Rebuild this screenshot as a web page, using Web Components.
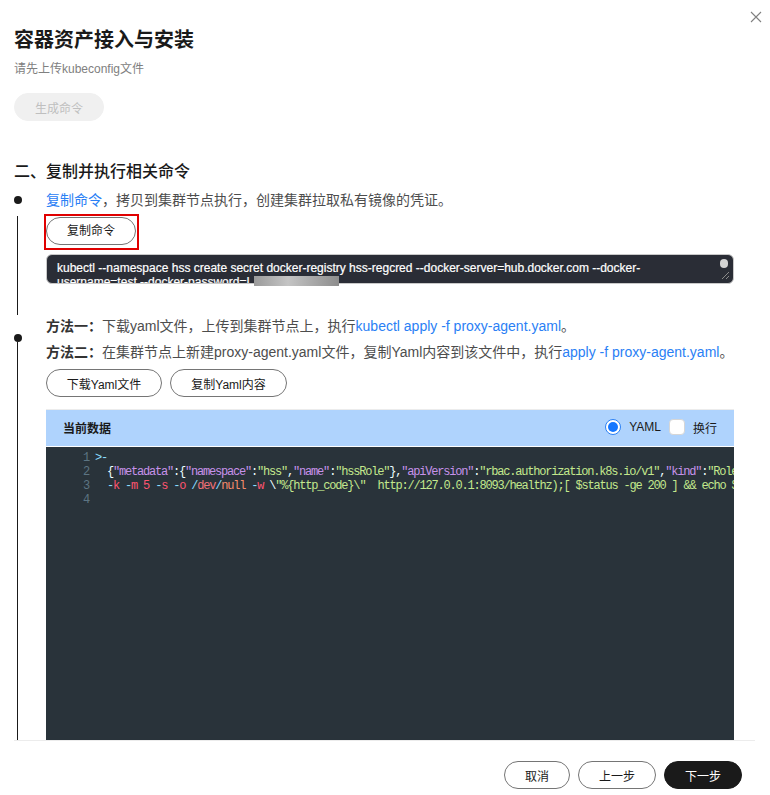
<!DOCTYPE html>
<html lang="zh-CN"><head><meta charset="utf-8"><title>容器资产接入与安装</title>
<style>
html,body{margin:0;padding:0;background:#fff;overflow:hidden;font-family:"Liberation Sans","Noto Sans CJK SC",sans-serif;color:#1a1a1a}
</style></head><body>

<template id="pill-tpl"><style>
:host{display:inline-flex;align-items:center;justify-content:center;box-sizing:border-box;height:28px;border-radius:14px;border:1px solid #757575;background:#fff;font-size:12px;color:#1a1a1a;white-space:nowrap}
:host([variant=primary]){background:#1a1a1a;border-color:#1a1a1a;color:#fff}
:host([variant=disabled]){background:#f0f0f0;border-color:#f0f0f0;color:#bfbfbf}
</style><slot></slot></template>

<template id="rail-tpl"><style>
:host{display:grid;grid-template-columns:32px minmax(0,1fr);min-width:0}
.rail{display:flex;flex-direction:column;align-items:flex-start}
.dot{width:8px;height:8px;border-radius:50%;background:#1a1a1a;flex:none;margin-top:var(--dot-top,0)}
.line{width:1px;background:#1a1a1a;flex:1;margin-left:3px;margin-top:var(--gap,0)}
.body{min-width:0}
</style><div class="rail"><div class="dot"></div><div class="line"></div></div><div class="body"><slot></slot></div></template>

<template id="cmd-tpl"><style>
:host{display:block;box-sizing:border-box;height:30px;border:1px solid #c9c9c9;border-radius:6px;background:#2a2d36;position:relative;overflow:hidden;color:#fff;font-size:12px;line-height:14px;-webkit-text-stroke:.2px #fff}
.t{padding:6px 14px 0 10px}
.thumb{position:absolute;right:5px;top:4px;width:8px;height:9px;border-radius:4px;background:#d4d4d4}
svg{position:absolute;right:3px;bottom:3px}
</style><div class="t"><slot></slot></div><div class="thumb"></div>
<svg width="9" height="9" viewBox="0 0 9 9"><path d="M1 8L8 1M5 8L8 5" stroke="#8a8a8a" stroke-width="1" fill="none"/></svg></template>

<template id="viewer-tpl"><style>
:host{display:block;width:688px;box-sizing:border-box}
.head{box-sizing:border-box;height:38px;background:#afd3fd;border-top:1px solid #ececec;border-bottom:1px solid #fff;display:flex;align-items:center;padding:0 17px 2px;font-size:12px;color:#1a1a1a}
.title{font-weight:600;flex:1}
.radio{width:16px;height:16px;border-radius:50%;border:1px solid #2a80f5;box-sizing:border-box;background:#fff;display:flex;align-items:center;justify-content:center;margin-right:8px}
.radio i{width:10px;height:10px;border-radius:50%;background:#1476ff;display:block}
.yaml{margin-right:8px}
.check{width:16px;height:16px;border-radius:4px;border:1px solid #d6d6d6;box-sizing:border-box;background:#fff;margin-right:8px}
.code{background:#29333a;height:293px;overflow:hidden;padding-top:4px;box-sizing:border-box}
</style><div class="head"><span class="title">当前数据</span><span class="radio"><i></i></span><span class="yaml">YAML</span><span class="check"></span><span>换行</span></div>
<div class="code"><slot></slot></div></template>

<template id="line-tpl"><style>
:host{display:flex;height:14px;font:12px/14px "Liberation Mono",monospace;letter-spacing:-1.2px;white-space:pre;color:#eeffff}
.n{width:43px;text-align:right;color:#5d7583;flex:none}
.c{margin-left:6px}
</style><span class="n"></span><span class="c"><slot></slot></span></template>

<template id="dialog-tpl"><style>
:host{display:block;width:770px;height:795px;position:relative;overflow:hidden;background:#fff}
.x{position:absolute;right:8px;top:11px}
.scroll{height:741px;box-sizing:border-box;margin:0 15px 0 14px;border-bottom:1px solid #ececec;overflow:hidden;padding-top:28px}
.foot{display:flex;justify-content:flex-end;gap:8px;padding:20px 28px 0 0}
</style><svg class="x" width="12" height="12" viewBox="0 0 12 12"><path d="M1 1L11 11M11 1L1 11" stroke="#808080" stroke-width="1.1" fill="none"/></svg>
<div class="scroll"><slot></slot></div><div class="foot"><slot name="foot"></slot></div></template>

<modal-dialog>
  <style>
    .h1{font-size:20px;line-height:24px;font-weight:700;color:#1a1a1a}
    .sub{font-size:12px;line-height:18px;color:#808080;margin-top:8px}
    .gen{margin-top:15px;display:flex;width:90px}
    .h2{font-size:16px;line-height:24px;font-weight:500;color:#1a1a1a;margin-top:39px}
    .txt{font-size:14px;line-height:20px;color:#4d4d4d;white-space:nowrap}
    .txt a{color:#2a80f5;text-decoration:none}
    .txt strong{font-weight:700;color:#333}
    step-rail.a{--dot-top:6px;--gap:12px;height:125px;margin-top:6px}
    step-rail.b{--dot-top:18px;height:424px;margin-top:1px}
    .copywrap{display:inline-block;box-sizing:border-box;margin:4px 0 0 -2px;border:2px solid #e00000;padding:1px 1px 3px 0;line-height:0;vertical-align:top}
    .btn1{width:90px}
    .cmdbox{margin-top:4px;position:relative;width:688px}
    .mask{position:absolute;left:208px;top:22px;width:85px;height:10px;background:linear-gradient(90deg,#9a9a9a,#c4c4c4 40%,#a8a8a8 70%,#8d8d8d)}
    .row{display:flex;gap:8px;margin-top:7px}
    .kw{color:#c792ea}.s{color:#c3e88d}.r{color:#ff5370}.cy{color:#89ddff}.o{color:#f78c6c}.f{color:#f07178}
  </style>
  <div class="h1">容器资产接入与安装</div>
  <div class="sub">请先上传kubeconfig文件</div>
  <pill-button class="gen" variant="disabled">生成命令</pill-button>
  <div class="h2">二、复制并执行相关命令</div>
  <step-rail class="a">
    <div class="txt"><a href="#">复制命令</a>，拷贝到集群节点执行，创建集群拉取私有镜像的凭证。</div>
    <div class="copywrap"><pill-button class="btn1">复制命令</pill-button></div>
    <div class="cmdbox"><command-box>kubectl --namespace hss create secret docker-registry hss-regcred --docker-server=hub.docker.com --docker-username=test --docker-password=L</command-box><div class="mask"></div></div>
  </step-rail>
  <step-rail class="b">
    <div class="txt"><strong>方法一：</strong>下载yaml文件，上传到集群节点上，执行<a href="#">kubectl apply -f proxy-agent.yaml</a>。</div>
    <div class="txt" style="margin-top:6px"><strong>方法二：</strong>在集群节点上新建proxy-agent.yaml文件，复制Yaml内容到该文件中，执行<a href="#">apply -f proxy-agent.yaml</a>。</div>
    <div class="row"><pill-button style="width:116px">下载Yaml文件</pill-button><pill-button style="width:117px">复制Yaml内容</pill-button></div>
    <yaml-viewer style="margin-top:12px">
      <code-line n="1"><span class="cy">&gt;-</span></code-line>
      <code-line n="2">  {<span class="kw">"metadata"</span>:{<span class="kw">"namespace"</span>:<span class="s">"hss"</span>,<span class="kw">"name"</span>:<span class="s">"hssRole"</span>},<span class="kw">"apiVersion"</span>:<span class="s">"rbac.authorization.k8s.io/v1"</span>,<span class="kw">"kind"</span>:<span class="s">"Role"</span></code-line>
      <code-line n="3">  <span class="cy">-</span><span class="r">k</span> <span class="cy">-</span><span class="r">m</span> <span class="r">5</span> <span class="cy">-</span><span class="r">s</span> <span class="cy">-</span><span class="r">o</span> <span class="cy">/</span><span class="f">dev</span><span class="cy">/</span><span class="o">null</span> <span class="cy">-</span><span class="r">w</span> \<span class="s">"%{http_code}\"  http://127.0.0.1:8093/healthz);[ $status -ge 200 ] &amp;&amp; echo $status</span></code-line>
      <code-line n="4"></code-line>
    </yaml-viewer>
  </step-rail>
  <pill-button slot="foot" style="width:66px">取消</pill-button>
  <pill-button slot="foot" style="width:78px">上一步</pill-button>
  <pill-button slot="foot" variant="primary" style="width:78px">下一步</pill-button>
</modal-dialog>

<script>
function reg(name,tpl,init){
  customElements.define(name,class extends HTMLElement{
    constructor(){super();const r=this.attachShadow({mode:'open'});r.appendChild(document.getElementById(tpl).content.cloneNode(true));}
    connectedCallback(){if(init)init(this);}
  });
}
reg('pill-button','pill-tpl');
reg('step-rail','rail-tpl');
reg('command-box','cmd-tpl');
reg('yaml-viewer','viewer-tpl');
reg('code-line','line-tpl',el=>{el.shadowRoot.querySelector('.n').textContent=el.getAttribute('n');});
reg('modal-dialog','dialog-tpl');
</script>
</body></html>
